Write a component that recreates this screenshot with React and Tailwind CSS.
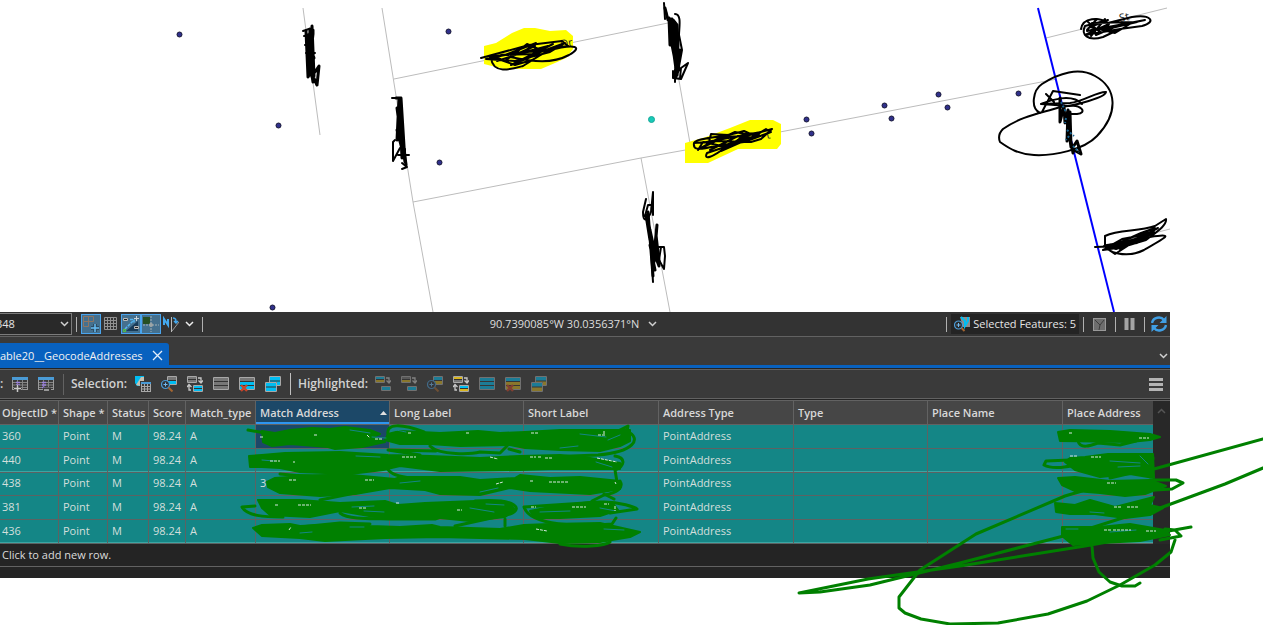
const columns = [
  { name: "ObjectID *", width: "w-[59px]" },
  { name: "Shape *", width: "w-[49px]" },
  { name: "Status", width: "w-[41px]" },
  { name: "Score", width: "w-[37px]" },
  { name: "Match_type", width: "w-[70px]" },
  { name: "Match Address", width: "w-[134px]", sorted: true },
  { name: "Long Label", width: "w-[134px]" },
  { name: "Short Label", width: "w-[135px]" },
  { name: "Address Type", width: "w-[135px]" },
  { name: "Type", width: "w-[134px]" },
  { name: "Place Name", width: "w-[135px]" },
  { name: "Place Address", width: "" },
];

const rows = [
  ["360", "Point", "M", "98.24", "A", "", "", "", "PointAddress", "", "", ""],
  ["440", "Point", "M", "98.24", "A", "", "", "", "PointAddress", "", "", ""],
  ["438", "Point", "M", "98.24", "A", "3", "", "", "PointAddress", "", "", ""],
  ["381", "Point", "M", "98.24", "A", "", "", "", "PointAddress", "", "", ""],
  ["436", "Point", "M", "98.24", "A", "", "", "", "PointAddress", "", "", ""],
];

const CYAN = "#00bdf2";
const GREY = "#a8a8a8";
const GOLD = "#d8b520";

function Icon({ children, size = 16 }) {
  return (
    <svg width={size} height={size} viewBox={`0 0 ${size} ${size}`} fill="none" aria-hidden="true" className="block shrink-0">
      {children}
    </svg>
  );
}

function Sheet({ x, y, w, h, bars }) {
  const step = (h - 1) / bars.length;
  return (
    <g>
      <rect x={x} y={y} width={w} height={h} fill="#333" />
      {bars.map((c, i) => (
        <rect key={i} x={x + 1} y={y + 1 + i * step} width={w - 2} height={step - 1} fill={c} />
      ))}
      <path d={`M${x + 0.5} ${y + 0.5}h${w - 1}v${h - 1}h${-(w - 1)}z`} stroke={GREY} />
    </g>
  );
}

function FieldTable({ minus }) {
  return (
    <Icon>
      <rect x="0.5" y="1.5" width="15" height="12" stroke="#9a9a9a" />
      <rect x="0" y="1" width="16" height="3" fill="#4a9bd6" />
      <path d="M1 6.5h14M1 9h14M1 11.5h14M5.5 4v10M10.5 4v10" stroke="#858585" />
      <path d="M4 6.5h4M4 9h4M4 11.5h3" stroke="#9b7fe0" strokeWidth="1.5" />
      {minus ? (
        <>
          <path d="M5 13.5h8" stroke="#3a3a3a" strokeWidth="4" />
          <path d="M6 14h5" stroke="#b8b8b8" strokeWidth="1.5" />
        </>
      ) : (
        <>
          <path d="M2 12.500h7M5.500 9v7" stroke="#3a3a3a" strokeWidth="4" />
          <path d="M2 12.500h7M5.500 9v7" stroke="#c8c8c8" strokeWidth="1.5" />
        </>
      )}
    </Icon>
  );
}

function SelectByAttributes() {
  return (
    <Icon>
      <path d="M0 0h9v4H5v6H2L0 7z" fill={CYAN} />
      <path d="M1 9L6 1h3v4H5v5z" fill="#c9c0b0" />
      <rect x="5" y="5" width="11" height="11" fill="#3a3a3a" />
      <rect x="6.5" y="6.5" width="9" height="9" stroke={GREY} />
      <rect x="6" y="6" width="10" height="2" fill="#4a9bd6" />
      <path d="M7 10.5h8M7 13h8M9.5 8v8M12.5 8v8" stroke={GREY} />
    </Icon>
  );
}

function ZoomSheet({ gold }) {
  return (
    <Icon>
      <Sheet x={6} y={0} w={10} h={9} bars={gold ? [CYAN, GOLD] : ["#777", CYAN]} />
      <circle cx="4.500" cy="8.500" r="4" fill="#30343a" stroke="#4a9bd6" strokeWidth="1.200" />
      <path d="M2.500 8.500h4M4.500 6.500v4" stroke="#70baf0" />
      <path d="M7.500 11.500l4 4" stroke="#a36531" strokeWidth="2" />
    </Icon>
  );
}

function SwitchSheet({ top, bottom, single }) {
  return (
    <Icon>
      <Sheet x={0} y={0} w={10} h={7} bars={top} />
      <Sheet x={6} y={single ? 10 : 9} w={10} h={single ? 5 : 7} bars={bottom} />
      <path d="M11 2h3v5M11.5 4.5L14 7l2-2.5" stroke="#c8c8c8" strokeWidth="1.3" />
      {!single && <path d="M4 14H2V9M0 11l2-2.5L4.500 11" stroke="#c8c8c8" strokeWidth="1.3" />}
    </Icon>
  );
}

function FullSheet({ color }) {
  return (
    <Icon>
      <Sheet x={0} y={1} w={16} h={13} bars={[color, color, color]} />
    </Icon>
  );
}

function ClearSheet({ color, top = "#777" }) {
  return (
    <Icon>
      <Sheet x={0} y={1} w={16} h={13} bars={[top, color, color]} />
      <path d="M2 9l6 6M8 9l-6 6" stroke="#c8452a" strokeWidth="2.400" />
    </Icon>
  );
}

function StackSheets({ color }) {
  return (
    <Icon>
      <Sheet x={4} y={0} w={12} h={10} bars={[CYAN, color]} />
      <Sheet x={0} y={6} w={12} h={10} bars={[CYAN, color]} />
    </Icon>
  );
}

function Chevron({ color = "#d0d0d0" }) {
  return (
    <svg width="9" height="6" viewBox="0 0 9 6" fill="none" aria-hidden="true" className="block shrink-0">
      <path d="M1 1l3.500 3.500L8 1" stroke={color} strokeWidth="1.500" />
    </svg>
  );
}

function ToolButton({ label, dim, children }) {
  return (
    <button type="button" aria-label={label} className={dim ? "opacity-50" : ""}>
      {children}
    </button>
  );
}

function Divider() {
  return <span className="h-[15px] w-px shrink-0 bg-[#b0b0b0]" />;
}

const dots = [
  [179, 34], [448, 31], [278, 125], [439, 162], [272, 307], [806, 119], [811, 133],
  [884, 105], [891, 118], [938, 94], [947, 107], [1018, 93],
];

function MapView() {
  return (
    <svg width="1263" height="312" viewBox="0 0 1263 312" fill="none" role="img" aria-label="Map" className="block max-w-none">
      <path
        d="M303 8L320 135M382 8L413 202L433 312M394 79L668 23M667 12L691 149M413 202L641 158L691 149L1057 79M641 158L670 312M1046 38L1167 8M1100 247L1170 229"
        stroke="#bcbcbc"
      />
      <path d="M484 46L496 43L512 33L524 28L535 28L550 31L566 30L573 36V49L566 58L555 63L541 69H504L484 64z" fill="#ff0" />
      <path d="M685 143L706 137L730 128L750 120H773L781 124V144L777 149H758L738 149L708 163H685z" fill="#ff0" />
      <path d="M1038 8L1114 312" stroke="#00f" strokeWidth="2" />
      {dots.map(([x, y]) => (
        <circle key={`${x}-${y}`} cx={x + 0.5} cy={y + 0.5} r="2.500" fill="#30308c" stroke="#191936" />
      ))}
      <circle cx="651.5" cy="119.5" r="3" fill="#18cab8" stroke="#18a898" />
      <g fill="#222" fontFamily="Open Sans, sans-serif" fontSize="11">
        <text transform="translate(561 48) rotate(-10)">Dr</text>
        <text transform="translate(767 139) rotate(-12)">t</text>
        <text transform="translate(1120 22) rotate(-12)">St</text>
      </g>
      <g stroke="#000" strokeWidth="3" strokeLinecap="round" strokeLinejoin="round">
        <path d="M306 31L308 77L310 29L312 75L308 35L312 76L312 26L314 76L310 45L313 66L308 50L313 82L312 37L312 77L310 59L308 77L311 72L317 85L319 66L315 72L308 76L313 34L313 30L309 43L314 58L309 66" />
        <path d="M396 98H401L397 140L399 98L402 158L401 98L405 162L397 108L403 153L398 110L406 165L399 105L405 160L397 130L402 145" />
        <path d="M665 8L668 20L672 19L670 45L669 18L676 69L673 20L677 25L678 45L676 77L674 25L679 70L671 30L677 65L671 40L675 60L678 35L676 57L680 50L677 75" />
        <path d="M646 215L650 240L648 212L653 276L649 225L654 255L657 225L654 262L650 230L656 258L659 266L656 235L659 262L650 245L655 270L651 250" />
      </g>
      <g stroke="#000" strokeWidth="2" strokeLinecap="round" strokeLinejoin="round">
        <path d="M303 31L309 29M304 36L309 35M305 45H311M306 53H315" />
        <path d="M392 98H401M395 140L393 142V161L400 148M405 149V160M398 155H409M402 163L407 167L402 169" />
        <path d="M664 3L665 19M675 14C682 14 679 28 679 35L682 50L678 72M673 71V78L681 79L688 63L681 68L680 78M675 70V82" />
        <path d="M646 199L643 212C643 224 648 220 651 212L653 192V215M653 205H648L645 216M651 250L653 282M657 247H664L665 256L664 269L659 260L661 247" />
        <path d="M481 58L529 45L562 41L568 46L553 48L532 60L515 65L501 60L490 57L523 52L536 43L505 55L486 59L515 61L550 52L565 43L543 51L527 44L505 61L493 56M491 58C493 75 512 69 523 66L547 51C577 43 583 47 569 55C552 64 534 62 510 57L535 46M497 61L525 52L548 46L516 63L545 50L501 55L538 54L511 65L553 44" />
        <path d="M694 143C697 137 719 139 744 131L755 136L766 129L771 132L744 142L715 146C696 151 693 149 694 143L709 142L711 134L728 135L715 141L751 142L761 139L772 129L746 136L721 137L699 149L735 132L750 135L726 147C713 157 703 161 707 153L731 145L747 133L759 135L722 146L703 142L698 150M710 150L738 136M721 151L755 136M701 143L761 132" />
        <path d="M1081 29C1083 17 1099 17 1108 23L1132 17C1151 14 1157 22 1142 26L1120 29L1103 37C1087 42 1081 34 1085 26L1108 20L1090 27L1115 33L1130 24L1106 27L1087 31L1145 20L1117 26L1096 35L1092 23L1137 22L1103 30L1109 24L1085 35L1126 28M1088 22L1100 32M1097 19L1087 30M1105 19L1091 36" />
        <path d="M1040 113C1030 108 1033 90 1042 84C1059 73 1079 67 1095 76C1117 88 1119 113 1097 136C1084 150 1053 156 1034 155C1018 154 1010 149 1000 142C998 137 1000 132 1003 129C1023 115 1043 113 1060 107C1075 106 1106 97 1106 92C1098 91 1083 102 1070 103L1041 104L1069 106C1081 104 1088 113 1077 114H1067M1042 112L1053 91L1080 95M1046 94L1054 102M1041 104C1050 100 1072 93 1082 104" />
        <path strokeWidth="3" d="M1060 98V122L1064 106L1065 123L1068 110L1067 141L1070 112L1071 147L1068 125L1073 153M1073 147L1077 141L1081 154L1072 149" />
        <path d="M1095 247L1121 246L1150 237C1175 233 1167 237 1144 250C1126 259 1106 252 1105 245V236C1119 229 1138 232 1155 226L1166 219C1167 225 1158 231 1146 240L1116 249L1104 246L1135 240L1158 228L1124 247L1103 250L1141 233L1155 228L1137 243L1107 248L1154 233L1122 239L1106 248L1115 254L1143 236L1120 250L1148 231L1113 245" />
        <path strokeWidth="4" d="M1107 246L1130 243L1143 238L1153 232M1120 244L1138 240" />
      </g>
      <path d="M1061 102L1066 112M1067 130L1074 136M1073 146L1079 152M1066 118L1065 123M1069 136L1066 140" stroke="#176594" strokeWidth="2" strokeDasharray="2 2" />
    </svg>
  );
}

function GreenMarks() {
  return (
    <svg width="1263" height="625" viewBox="0 0 1263 625" fill="none" aria-hidden="true" className="pointer-events-none absolute left-0 top-0 max-w-none">
      <g fill="#008000" stroke="#008000" strokeWidth="2" strokeLinejoin="round">
        <path d="M262 431L275 433L290 430L312 428L330 429L345 427L370 430L380 434L372 437L385 442L362 447L335 449L328 447L290 444L272 446L263 442z" />
        <path d="M388 434L400 431L440 433L478 431L500 433L525 432L560 430L600 430L630 430L630 441L620 446L600 451L560 450L525 448L510 445L460 446L430 444L400 444L385 440z" />
        <path d="M249 456L262 455L285 453L340 452L388 455L430 456L480 458L520 456L560 455L590 458L620 463L620 469L550 469L520 470L440 471L400 466L383 470L350 474L300 472L280 468L262 467L250 467z" />
        <path d="M267 482L275 478L290 477L352 475L395 479L400 477L460 477L480 480L515 478L520 475L550 478L580 477L620 481L620 489L590 494L570 493L530 491L510 488L480 495L440 494L425 490L390 488L355 494L320 496L280 493L268 487z" />
        <path d="M258 500L300 500L340 503L385 501L398 505L425 503L475 501L510 503L515 510L505 517L470 521L440 518L395 517L375 517L340 511L310 517L270 515L262 508z" />
        <path d="M530 511L550 507L590 502L612 502L618 510L600 516L560 518L535 518z" />
        <path d="M253 528L262 525L290 524L300 526L345 524L370 526L400 527L432 525L440 527L500 529L524 525L550 524L600 523L640 532L630 537L600 542L560 543L525 539L440 537L385 538L325 541L300 538L262 536z" />
        <path d="M1058 432L1070 430L1110 431L1150 434L1160 437L1150 440L1130 442L1060 441z" />
        <path d="M1070 458L1085 457L1108 454L1153 454L1154 478L1130 474L1100 477L1075 470L1065 462z" />
        <path d="M1058 478L1075 477L1110 481L1150 480L1166 486L1145 494L1125 496L1100 493L1075 491L1062 485z" />
        <path d="M1055 503L1075 505L1090 500L1115 507L1154 497L1150 505L1163 508L1150 515L1125 518L1095 514L1070 514L1056 512z" />
        <path d="M1062 527L1100 527L1130 524L1165 530L1170 535L1140 541L1100 543L1073 545L1062 536z" />
      </g>
      <path
        d="M388 431c8-2 12 0 18 1M372 437l14 1M350 430l20 3M262 460l12 1M580 434l26 3M608 440l12-5M560 448l18-2M424 446l22 2M356 456l24 1M596 462l16 5M400 483l20-2M480 492l18-4M352 507l22-1M364 511l20 1M470 508l24 4M486 504l18 1M540 512l30-1M600 508l16 3M300 533l12-1M350 527l14 0M604 529l20 1M1110 461l30 2M1118 467l22-1M1090 512l14 1M1110 532l26-2M1066 529l12 0M1140 456l8 8"
        stroke="#148686"
        strokeLinecap="round"
      />
      <g stroke="#008000" strokeWidth="3" strokeLinejoin="round" strokeLinecap="round">
        <path d="M248 430L265 433M388 434C386 424 400 423 424 432M620 430L628 426L627 431C643 439 633 452 598 455L545 457M430 446C440 456 472 454 480 452L500 453L507 446L502 441M509 449L520 452M436 451L388 450L420 455" />
        <path d="M385 464C389 476 400 476 410 478M615 456C627 458 624 467 615 470L617 482M280 474C335 480 374 470 390 461M620 481C624 488 617 493 604 495L592 501M604 494L614 499" />
        <path d="M242 507L255 506M242 507C247 516 264 517 283 517M320 500L385 487M340 513C350 521 380 518 390 519L435 519L456 512M475 501C520 498 522 510 510 514L455 526M524 507C530 526 580 527 612 524L616 518M524 507L600 502C620 501 636 508 637 509L610 513M505 519V526" />
        <path d="M300 527L340 523L370 524M560 544C580 548 605 546 610 542M1078 441C1080 449 1090 446 1098 443L1120 445L1136 441M1070 460L1046 461L1044 465C1055 471 1074 465 1084 463M1150 480L1176 480L1183 483L1172 489L1155 490M1110 478L1140 471M1150 472L1153 458" />
        <path d="M1154 469L1263 439M1160 508L1225 484L1263 468M1082 491L1065 496L976 534L920 570L899 597V608L905 613L921 619L950 624L998 623L1048 614L1087 601L1120 585L1155 565L1171 552L1175 540" />
        <path d="M1154 508L1075 533L960 563L870 585L820 592L799 593L868 579L960 566L1085 546L1191 527M1092 546L1093 558L1099 572L1110 582L1122 586H1135L1140 583M1165 529L1175 530L1181 536L1160 540" />
      </g>
      <path
        d="M260 437h3M314 435h4M367 435l3 3M375 439h7M408 433h4M466 433h4M531 433h8M598 435h7M270 461h10M293 462h2M402 457h14M490 457l8 2M530 457h6M538 457h4M545 458h7M597 458l20 4M289 480h8M365 480h9M496 484l7-2M530 481h4M549 482h20M615 482l1 2M275 505h3M298 505h13M359 508h7M396 503h3M457 510h5M531 507h5M572 507h14M604 504h5M289 530l2-3M536 529l11 2M1069 433h4M1139 438h10M1070 456h8M1091 457h10M1107 483h9M1114 507h8M1127 507h12M1104 530h7M1113 530h18M1146 531h10M604 431v4M615 506v5"
        stroke="#d6e8df"
        strokeDasharray="3 1"
      />
    </svg>
  );
}

function StatusBar() {
  return (
    <div className="flex h-[25px] items-center border-b border-[#626262] bg-[#333333]">
      <div className="flex flex-1 items-center">
        <div className="relative flex h-[22px] w-[72px] items-center border border-l-0 border-[#7b7b7b] bg-[#292929]">
          <select aria-label="Map scale" className="-ml-[4px] h-5 w-full appearance-none bg-transparent text-[11px] leading-4 text-[#e4e4e4] outline-none">
            <option>348</option>
          </select>
          <span className="pointer-events-none absolute right-[2px]">
            <Chevron />
          </span>
        </div>
        <span className="ml-1 h-[15px] w-px bg-[#b0b0b0]" />
        <button type="button" aria-label="Snapping" className="ml-1 flex size-5 items-center justify-center border border-[#4aa5ee] bg-[#45708e]">
          <Icon size={18}>
            <path d="M1.500 1.500h5v5h-5zM6.500 1.500h5v5h-5zM1.500 6.500h5v5h-5z" stroke="#8e7664" />
            <path d="M9 13h8M13 9v8" stroke="#2e4c63" strokeWidth="4" />
            <path d="M9 13h8M13 9v8" stroke="#67bdf5" strokeWidth="1.500" />
          </Icon>
        </button>
        <button type="button" aria-label="Grid" className="mx-[3px]">
          <Icon size={14}>
            <path d="M.5.5h12v12H.5zM3.500 0v13M6.500 0v13M9.500 0v13M0 3.500h13M0 6.500h13M0 9.500h13" stroke="#929292" />
          </Icon>
        </button>
        <button type="button" aria-label="Inference" className="flex size-5 items-center justify-center border border-[#4aa5ee] bg-[#45708e]">
          <Icon size={18}>
            <path d="M4 16L16 6v10z" fill="#193c59" />
            <path d="M3 14L12 5M8 4.500h4v4" stroke="#55b5f0" strokeWidth="1.500" strokeDasharray="3 1" />
            <path d="M12 3.500h5M14.500 1v5" stroke="#c8d4dc" />
            <path d="M1.500 3.500h4v2h-4zM12.500 11.500h4v2h-4z" fill="#222" stroke="#bbb" />
            <path d="M1.500 14.500h2v2h-2z" stroke="#53c83d" />
          </Icon>
        </button>
        <button type="button" aria-label="Dynamic constraints" className="flex size-5 items-center justify-center border border-[#4aa5ee] bg-[#45708e]">
          <Icon size={18}>
            <path d="M1 2h7v7H1z" fill="#264f23" />
            <path d="M9 1v16M1 10h16" stroke="#a6b2b5" strokeDasharray="2 1" />
            <circle cx="9" cy="10" r="2" fill="#9da5a6" />
          </Icon>
        </button>
        <button type="button" aria-label="North correction" className="ml-[2px]">
          <Icon>
            <path d="M1 9V3l4 6V3" stroke="#44aaf0" strokeWidth="2" />
            <path d="M8.500 1v15" stroke="#bbb" />
            <path d="M9 15l7-9" stroke="#999" />
            <path d="M10 2c3 0 3 2 3 5M11 5l2 2 2-2" stroke="#44aaf0" strokeWidth="1.500" />
          </Icon>
        </button>
        <button type="button" aria-label="More map tools" className="ml-[6px]">
          <Chevron color="#ededed" />
        </button>
        <span className="ml-2 h-[15px] w-px bg-[#b0b0b0]" />
      </div>
      <button type="button" className="flex items-center gap-[9px] whitespace-nowrap pr-5 text-[11px] leading-4 text-[#dedede]">
        90.7390085°W 30.0356371°N
        <Chevron />
      </button>
      <div className="flex flex-1 items-center justify-end pr-[3px]">
        <Divider />
        <button type="button" className="ml-1 flex h-5 items-center gap-[3px] whitespace-nowrap bg-[#242424] px-[3px] text-[11px] leading-4 text-[#e6e6e6]">
          <Icon>
            <path d="M6 1h10v10H9z" fill="#8c8c8c" />
            <path d="M7 1l4 4v5l3-5V1" stroke={CYAN} strokeWidth="2" />
            <circle cx="4.500" cy="9" r="4" fill="#292929" stroke="#4a9bd6" strokeWidth="1.200" />
            <path d="M2.500 9h4M4.500 7v4" stroke="#70baf0" />
            <path d="M7.500 12l3 3" stroke="#a36531" strokeWidth="2" />
          </Icon>
          Selected Features: 5
        </button>
        <div className="ml-1 flex items-center gap-[9px]">
          <Divider />
          <button type="button" aria-label="Infer geometry">
            <Icon size={13}>
              <rect x=".5" y=".5" width="12" height="12" fill="#6e6e6e" stroke="#999" />
              <path d="M2 2l5 5-1 5M7 7l4-5" stroke="#3d3d3d" />
            </Icon>
          </button>
          <Divider />
        </div>
        <button type="button" aria-label="Pause drawing" className="mx-2">
          <Icon size={12}>
            <path d="M2.500 0v12M8.500 0v12" stroke="#a4a4a4" strokeWidth="4" />
          </Icon>
        </button>
        <Divider />
        <button type="button" aria-label="Refresh" className="ml-[6px]">
          <Icon>
            <path d="M1 7c1-6 9-7 12-3M15 9c-1 6-9 7-12 3" stroke="#409fe4" strokeWidth="2.400" />
            <path d="M15.500 0v7h-7zM.5 16V9h7z" fill="#409fe4" />
          </Icon>
        </button>
      </div>
    </div>
  );
}

function Toolbar() {
  return (
    <div className="flex h-[30px] items-center border-y border-[#626262] bg-[#3a3a3a] text-[12px] font-semibold leading-4 text-[#d2d2d2]">
      <span className="w-3">:</span>
      <div className="flex gap-[10px]">
        <ToolButton label="Add field"><FieldTable /></ToolButton>
        <ToolButton label="Delete field"><FieldTable minus /></ToolButton>
      </div>
      <span className="ml-[9px] h-[21px] w-px bg-[#626262]" />
      <span className="ml-[7px] w-16">Selection:</span>
      <div className="flex gap-[10px]">
        <ToolButton label="Select by attributes"><SelectByAttributes /></ToolButton>
        <ToolButton label="Zoom to selection"><ZoomSheet /></ToolButton>
        <ToolButton label="Switch selection"><SwitchSheet top={["#777", "#777"]} bottom={[CYAN, CYAN]} /></ToolButton>
        <ToolButton label="Clear selection"><FullSheet color="#777" /></ToolButton>
        <ToolButton label="Delete selection"><ClearSheet color={CYAN} /></ToolButton>
        <ToolButton label="Copy selection"><StackSheets color={CYAN} /></ToolButton>
      </div>
      <span className="ml-[9px] h-[22px] w-px bg-[#c0c0c0]" />
      <span className="ml-[7px] w-[77px]">Highlighted:</span>
      <div className="flex gap-[10px]">
        <ToolButton label="Unselect highlighted" dim><SwitchSheet top={[CYAN, GOLD]} bottom={[CYAN]} single /></ToolButton>
        <ToolButton label="Reselect highlighted" dim><SwitchSheet top={["#777", GOLD]} bottom={[CYAN]} single /></ToolButton>
        <ToolButton label="Zoom to highlighted" dim><ZoomSheet gold /></ToolButton>
        <ToolButton label="Switch highlighted"><SwitchSheet top={[GOLD, "#777"]} bottom={[CYAN, GOLD]} /></ToolButton>
        <ToolButton label="Clear highlighted" dim><FullSheet color={CYAN} /></ToolButton>
        <ToolButton label="Delete highlighted" dim><ClearSheet color={GOLD} top={CYAN} /></ToolButton>
        <ToolButton label="Copy highlighted" dim><StackSheets color={GOLD} /></ToolButton>
      </div>
      <button type="button" aria-label="Table options" className="ml-auto mr-[7px]">
        <Icon size={14}>
          <path d="M0 2.500h14M0 7.500h14M0 12.500h14" stroke="#b4b4b4" strokeWidth="3" />
        </Icon>
      </button>
    </div>
  );
}

function AttributeTable() {
  return (
    <div className="flex bg-[#242424]">
      <div className="min-w-0 flex-1">
        <table className="w-full table-fixed border-separate border-spacing-0 text-left text-[11px] leading-4">
          <thead>
            <tr className="h-6">
              {columns.map((c) => (
                <th
                  key={c.name}
                  scope="col"
                  className={`${c.width} whitespace-nowrap border-b border-r border-[#626262] p-0 text-[11px] font-semibold text-[#d8d8d8] first:pl-[2px] last:border-r-0 ${c.sorted ? "bg-[#1c4868] shadow-[inset_0_-2px_0_#2f96f0]" : "bg-[#464646]"} pl-1`}
                >
                  <span className="flex items-center justify-between pr-[2px]">
                    {c.name}
                    {c.sorted && (
                      <svg width="7" height="4" viewBox="0 0 7 4" aria-hidden="true">
                        <path d="M0 4L3.500 0L7 4z" fill="#e0e0e0" />
                      </svg>
                    )}
                  </span>
                </th>
              ))}
            </tr>
          </thead>
          <tbody>
            {rows.map((r, i) => (
              <tr key={r[0]} className={i === 2 ? "h-[23px]" : "h-6"}>
                {r.map((v, j) => (
                  <td
                    key={j}
                    className={`border-b border-r border-[#5d6262] p-0 pb-[2px] pl-1 text-[#d3dfdc] first:pl-[2px] last:border-r-0 ${i === 0 && j === 5 ? "bg-[#1c4868]" : "bg-[#148686]"} ${i === 1 || i === 4 ? "shadow-[inset_0_-1px_0_#3ba5a3]" : ""}`}
                  >
                    {v}
                  </td>
                ))}
              </tr>
            ))}
          </tbody>
        </table>
      </div>
      <div className="flex w-[17px] justify-center bg-[#282828] pt-[7px]">
        <span className="rotate-180 self-start">
          <Chevron color="#555" />
        </span>
      </div>
    </div>
  );
}

export default function App() {
  return (
    <main className="relative min-h-screen overflow-hidden bg-white font-['Open_Sans','Noto_Sans',sans-serif]">
      <MapView />
      <section className="mr-[93px] bg-[#242424]">
        <StatusBar />
        <div className="flex h-[31px] items-end justify-between border-b-[3px] border-[#0861bf] bg-[#3a3a3a]">
          <div className="flex h-[22px] items-center gap-[9px] rounded-tr-[3px] bg-[#0861bf] pr-[6px] pt-[3px] text-[11px] leading-4 text-[#f2f2f2]">
            <button type="button" className="whitespace-nowrap">able20__GeocodeAddresses</button>
            <button type="button" aria-label="Close table">
              <Icon size={11}>
                <path d="M1 1l9 9M10 1l-9 9" stroke="#e6effa" strokeWidth="1.300" />
              </Icon>
            </button>
          </div>
          <button type="button" aria-label="Open tables" className="mb-[6px] mr-[2px]">
            <Chevron />
          </button>
        </div>
        <div className="h-px bg-[#242424]" />
        <Toolbar />
        <div className="h-px bg-[#242424]" />
        <div className="h-px bg-[#626262]" />
        <AttributeTable />
        <div className="h-[23px] border-b border-[#626262] pl-[2px] text-[11px] leading-[22px] text-[#dcdcdc]">Click to add new row.</div>
        <div className="h-[11px]" />
      </section>
      <GreenMarks />
    </main>
  );
}
